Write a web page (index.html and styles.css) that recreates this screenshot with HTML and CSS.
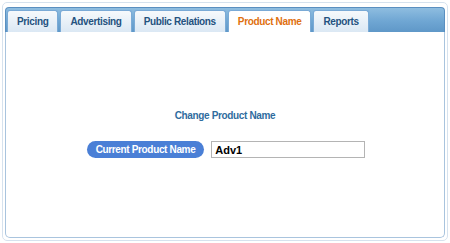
FILE: index.html
```html
<!DOCTYPE html>
<html lang="en">
<head>
    <meta charset="UTF-8">
    <title>Product Name</title>
    <link rel="stylesheet" href="styles.css">
</head>
<body>
    <div class="frame">
        <div class="tabs">
            <div class="tab">Pricing</div>
            <div class="tab">Advertising</div>
            <div class="tab">Public Relations</div>
            <div class="tab active">Product Name</div>
            <div class="tab">Reports</div>
        </div>
        <div class="panel">
            <h3>Change Product Name</h3>
            <div class="field">
                <span class="label">Current Product Name</span>
                <input class="name-input" type="text" value="Adv1">
            </div>
        </div>
    </div>
</body>
</html>
```

FILE: styles.css
```css
body {
    margin: 0;
    padding: 2px;
    font-family: "Liberation Sans", Arial, sans-serif;
    font-size: 10px;
    letter-spacing: -0.35px;
    background-color: white;
}
.frame {
    border: 1px solid #d6e2ee;
    border-radius: 5px;
    padding: 4px 2px 2px 2px;
    height: 231px;
    display: flex;
    flex-direction: column;
}
.tabs {
    display: flex;
    gap: 2px;
    padding: 2px 2px 0 1px;
    height: 22px;
    background: linear-gradient(#8ebde0, #6fa6d3 55%, #5f98c8);
    border: 1px solid #5a8fc0;
    border-bottom: none;
    border-radius: 4px 4px 0 0;
}
.tab {
    padding: 0 9px;
    line-height: 21px;
    font-weight: bold;
    color: #24527f;
    background: linear-gradient(#f6f9fc, #dbe8f4);
    border: 1px solid #7aaad6;
    border-bottom: none;
    border-radius: 3px 3px 0 0;
}
.tab.active {
    color: #e07010;
    background: #ffffff;
}
.panel {
    flex: 1;
    background: white;
    border: 1px solid #a9c4de;
    border-top: none;
    border-radius: 0 0 5px 5px;
    text-align: center;
}
.panel h3 {
    margin: 78px 0 0 0;
    font-size: 10px;
    color: #2f6c9e;
}
.field {
    display: flex;
    justify-content: center;
    gap: 7px;
    margin-top: 20px;
    padding-left: 2px;
}
.label {
    background-color: #4a7fd6;
    color: white;
    font-weight: bold;
    padding: 0 9px;
    line-height: 17px;
    border-radius: 9px;
}
.name-input {
    width: 146px;
    height: 15px;
    padding: 0 3px;
    border: 1px solid #b4b4b4;
    font-family: "Liberation Sans", Arial, sans-serif;
    font-size: 11px;
    letter-spacing: 0;
    font-weight: bold;
    color: #000;
}
```
